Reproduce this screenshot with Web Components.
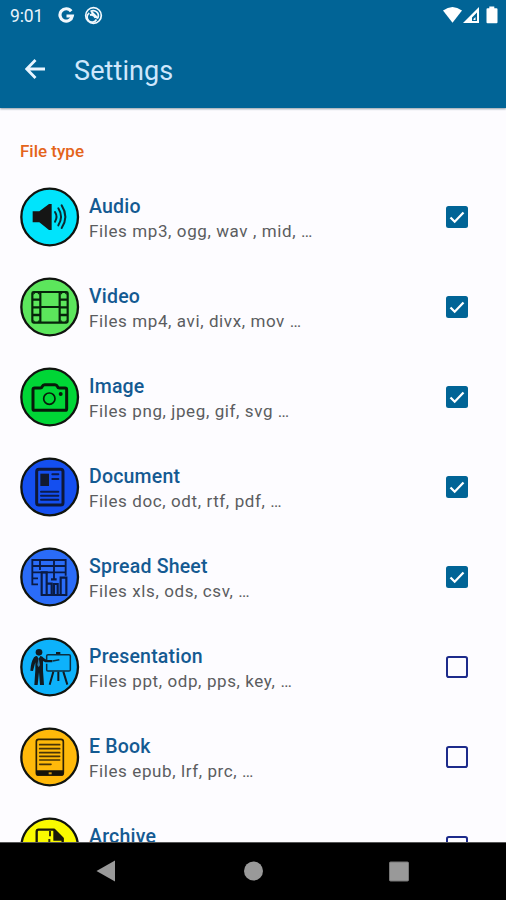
<!DOCTYPE html>
<html lang="en">
<head>
<meta charset="utf-8">
<title>Settings</title>
<style>
html,body{margin:0;height:100%}
body{font-family:Roboto,"Liberation Sans",sans-serif;background:#fdfcff;overflow:hidden}
</style>
</head>
<body>
<settings-screen></settings-screen>
<script>
const define = (name, html) => customElements.define(name, class extends HTMLElement {
  connectedCallback() {
    if (this.shadowRoot) return;
    const t = document.createElement('template');
    t.innerHTML = typeof html === 'function' ? html(this) : html;
    this.attachShadow({ mode: 'open' }).appendChild(t.content.cloneNode(true));
  }
});

// Glyphs are drawn on a 180-unit field that starts at 30,20.
const GLYPHS = {
  audio: ['#00e4fc', `<path fill="#151515" d="M68 93h20l29-22h8v78h-8l-29-23H68z"/>
    <g fill="none" stroke="#0a2a30" stroke-width="6" stroke-linecap="round"><path d="M135 95q9 14 0 29M145 84q16 25 0 51M155 75q22 34 0 68"/></g>`],
  video: ['#5ce65c', `<g fill="none" stroke="#06250a" stroke-width="6.500"><rect x="67" y="65" width="106" height="92" rx="4"/><path d="M91 65v92M149 65v92M91 110h58"/></g>
    <g fill="none" stroke="#06250a" stroke-width="7"><path d="M67 88h24M67 111h24M67 134h24M149 88h24M149 111h24M149 134h24"/></g>
    <g fill="#06250a"><path d="M70 68h6l-6 6zM88 68h-6l6 6zM152 68h6l-6 6zM170 68h-6l6 6zM70 154h6l-6-6zM88 154h-6l6-6zM152 154h6l-6-6zM170 154h-6l6-6z"/></g>`],
  image: ['#00d636', `<path fill="none" stroke="#071a0a" stroke-width="9" stroke-linejoin="round" d="M74 83h17q4 0 6-5 2-5 7-5h31q5 0 7 5 2 5 6 5h17q5 0 5 5v57q0 5-5 5H74q-5 0-5-5V88q0-5 5-5z"/>
    <circle cx="118" cy="115" r="17" fill="none" stroke="#071a0a" stroke-width="5"/><circle cx="152" cy="101" r="6" fill="#071a0a"/>`],
  document: ['#144ff0', `<rect x="80" y="57" width="79" height="107" rx="7" fill="none" stroke="#0d1838" stroke-width="9"/>
    <path fill="#111a30" d="M91 70h26v37H91z"/><path stroke="#0b1b4c" stroke-width="6" stroke-linecap="round" d="M127 72h18M127 86h18M93 124h52M93 136h52M93 148h52"/>`],
  sheet: ['#2a6cf8', `<g fill="none" stroke="#0a1b45" stroke-width="5.500"><path d="M84 132H67V59h100v37H67M67 77h100M90 59v30M132 59v58M167 96v10M67 114h17"/>
    <path d="M95 165v-69h15v69M110 165v-35h15v35M132 165v-34h11v34M152 165v-53h17v53M92 164h80M123 117h17" stroke-width="6.500"/></g>`],
  presentation: ['#0db2fb', `<g fill="#111b22"><circle cx="87" cy="66" r="10"/><path d="M72 81q4-4 9-4l5 8 5-8q6 0 10 6l9 6 17 0v7h-21l-7-4v29l3 43H90l-3-38-4 38H73l3-45V96l-7 26-8-1q2-27 11-40z"/></g>
    <path d="M86 82l4 22-4 7-4-7z" fill="#2d7aa6"/>
    <g fill="none" stroke="#0c2e40" stroke-width="4.500"><path d="M110 89V77q0-4 4-4h63q4 0 4 4v41q0 4-4 4h-63q-4 0-4-4v-18M128 92l20-4" /><path stroke="#111b22" stroke-width="6" d="M130 124l-11 39M145 124v28M160 124l12 39M138 68h13"/></g>`],
  book: ['#ffb90a', `<rect x="79" y="57" width="81" height="107" rx="7" fill="none" stroke="#2c2105" stroke-width="5"/><path fill="#16140a" d="M78 150h83v10q0 6-6 6H84q-6 0-6-6z"/><rect x="116" y="156" width="9" height="6" fill="#d99d12"/>
    <path stroke="#493507" stroke-width="5" stroke-linecap="round" d="M89 73h60M89 85h60M89 97h60M89 108h60M89 119h60M89 132h34"/>`],
  archive: ['#fafa00', `<path fill="none" stroke="#17170a" stroke-width="7" stroke-linejoin="round" d="M80 160V64q0-6 6-6h46l26 26v76"/><path fill="#17170a" d="M130 56l30 28v7h-30z"/><path stroke="#33330a" stroke-width="6" d="M120 62v16M118 86v14"/>`]
};

define('file-icon', el => {
  const [bg, g] = GLYPHS[el.getAttribute('kind')];
  return `<style>:host{display:block;width:60px;height:60px}svg{display:block}</style>
  <svg width="60" height="60" viewBox="30 20 180 180"><circle cx="119" cy="110" r="85" fill="${bg}" stroke="#10140f" stroke-width="7"/>${g}</svg>`;
});

define('check-box', el => `<style>
  :host{display:block;width:22px;height:22px}svg{display:block}</style>
  <svg width="22" height="22" viewBox="0 0 22 22">${el.hasAttribute('checked')
    ? '<rect width="22" height="22" rx="2.500" fill="#016496"/><path d="M4.500 11.500l4.200 4.200L17.500 6.500" fill="none" stroke="#fff" stroke-width="2.300"/>'
    : '<rect x="1" y="1" width="20" height="20" rx="1.800" fill="none" stroke="#1d2b8b" stroke-width="2"/>'}</svg>`);

define('file-type-row', el => `<style>
  :host{display:flex;align-items:center;height:90px;box-sizing:border-box;padding:0 38px 0 20px;flex:none}
  .text{flex:1;margin-left:9px;padding-top:3px;white-space:nowrap}
  .title{font-size:19.500px;line-height:25px;font-weight:500;color:#145a92;letter-spacing:.2px}
  .sub{font-size:17px;line-height:25px;min-height:25px;color:#5b5c60;letter-spacing:.6px}
  </style><file-icon kind="${el.getAttribute('kind')}"></file-icon>
  <div class="text"><div class="title"><slot></slot></div><div class="sub"><slot name="sub"></slot></div></div>
  <check-box ${el.hasAttribute('checked') ? 'checked' : ''}></check-box>`);

define('status-bar', `<style>
  :host{display:flex;height:32px;align-items:center;color:#e8f3fb;padding:0 8px 0 10px}
  .time{font-size:17.500px;line-height:32px;width:48px;letter-spacing:-.1px;}
  svg{display:block}.sp{flex:1}</style>
  <span class="time">9:01</span>
  <svg width="48" height="32" viewBox="58 0 48 32" fill="none" stroke="#f2f8fd">
    <path stroke-width="3.200" d="M71.200 11.300A6.200 6.200 0 1 0 72.300 16H66.500"/>
    <circle cx="93.500" cy="15.500" r="7.800" stroke-width="1.700"/><path stroke-width="1.700" d="M89.300 13a5 5 0 1 0 7.200 6.500M90.500 11.500a5 5 0 0 1 7.200 6.500"/><path stroke-width="2" d="M90 15q4-1 5.500 3M91.500 12l6.500 6.500"/>
  </svg><span class="sp"></span>
  <svg width="58" height="32" viewBox="440 0 58 32" fill="#fff">
    <path d="M443 10.500Q452.500 3.500 462 10.500L452.500 22.700z"/>
    <path fill-rule="evenodd" d="M479 7v16h-16zM477 12.500l-5 5v3.500h5z"/><path d="M473.500 19l2-2v3h-2z"/>
    <path d="M489.300 6.500h5v1.700h2.200q1 0 1 1v13q0 1-1 1h-9q-1 0-1-1v-13q0-1 1-1h1.800z"/>
  </svg>`);

define('app-bar', `<style>
  :host{display:flex;align-items:center;height:76px;padding-left:25px;color:#cfe7fc}
  svg{display:block;margin-right:28px;margin-bottom:2px}span{font-size:27px;line-height:36px;letter-spacing:.1px;padding-top:2px}</style>
  <svg width="21" height="20" viewBox="0 0 21 20" fill="none" stroke="#e9f5ff" stroke-width="2.800"><path d="M20 10H2M10.500 1L1.700 10l8.800 9"/></svg>
  <span><slot></slot></span>`);

define('nav-bar', `<style>:host{display:block;height:58px;background:#000;border-top:1px solid #555;box-sizing:border-box}svg{display:block}</style>
  <svg width="506" height="57" viewBox="0 843 506 57" fill="#999"><path d="M96.500 871L115 860.500v21z"/><circle cx="253.500" cy="871" r="9.500"/><rect x="389.500" y="862" width="19" height="19" rx="1" stroke="#777" stroke-width="1"/></svg>`);

define('settings-screen', () => {
  const rows = [
    ['audio', 'Audio', 'Files mp3, ogg, wav , mid, …', 1],
    ['video', 'Video', 'Files mp4, avi, divx, mov …', 1],
    ['image', 'Image', 'Files png, jpeg, gif, svg …', 1],
    ['document', 'Document', 'Files doc, odt, rtf, pdf, …', 1],
    ['sheet', 'Spread Sheet', 'Files xls, ods, csv, …', 1],
    ['presentation', 'Presentation', 'Files ppt, odp, pps, key, …', 0],
    ['book', 'E Book', 'Files epub, lrf, prc, …', 0],
    ['archive', 'Archive', '', 0]
  ].map(([k, t, s, c]) => `<file-type-row kind="${k}" ${c ? 'checked' : ''}>${t}<span slot="sub">${s}</span></file-type-row>`).join('');
  return `<style>
  :host{display:flex;flex-direction:column;width:506px;height:900px;background:#fdfcff}
  header{background:#016496;height:108px;flex:none;box-shadow:0 1px 2px #8d9aa5}
  main{flex:1;min-height:0;overflow:hidden;display:flex;flex-direction:column}
  h2{margin:0;flex:none;height:64px;box-sizing:border-box;padding:31px 20px 0;font-size:17px;line-height:24px;font-weight:500;color:#e4641b}
  nav-bar{flex:none}
  </style><header><status-bar></status-bar><app-bar>Settings</app-bar></header>
  <main><h2>File type</h2>${rows}</main><nav-bar></nav-bar>`;
});
</script>
</body>
</html>
